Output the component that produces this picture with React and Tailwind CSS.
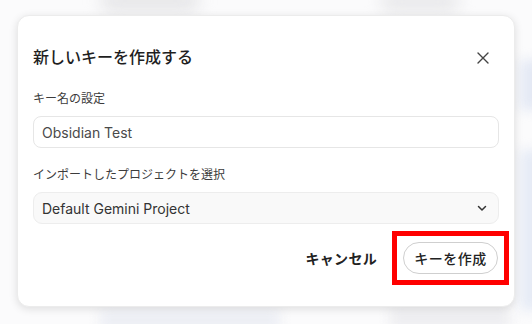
import React from "react";

export default function App() {
  return (
    <div
      className="relative w-[532px] h-[324px] overflow-hidden bg-[#fbfbfc]"
      style={{ fontFamily: "Inter, 'Noto Sans CJK JP', sans-serif" }}
    >
      {/* blurred page behind */}
      <div className="absolute left-[100px] top-[-10px] w-[100px] h-[22px] rounded-full bg-[#e6e6e8] blur-[8px]" />
      <div className="absolute left-[380px] top-[-8px] w-[80px] h-[20px] rounded-full bg-[#e8e8ea] blur-[8px]" />
      <div className="absolute left-[520px] top-[60px] w-[30px] h-[50px] bg-[#e4e9f4] blur-[6px]" />
      <div className="absolute left-[520px] top-[150px] w-[30px] h-[160px] bg-[#e6ebf5] blur-[6px]" />
      <div className="absolute left-[100px] top-[310px] w-[180px] h-[20px] bg-[#eceef4] blur-[6px]" />
      <div className="absolute left-[390px] top-[308px] w-[120px] h-[20px] bg-[#ededf0] blur-[6px]" />

      <div className="absolute left-[17px] top-[15px] w-[498px] h-[292px] rounded-[12px] bg-white border border-[#ececec] shadow-[0_2px_8px_rgba(0,0,0,0.12)] flex flex-col px-[15px]">
        <div className="flex items-center justify-between mt-[28px] h-[26px]">
          <div className="text-[16px] font-medium text-[#1f1f1f]">
            新しいキーを作成する
          </div>
          <svg width="14" height="14" viewBox="0 0 14 14" className="mr-[9px] mt-[2px]">
            <path d="M2 2 L12 12 M12 2 L2 12" stroke="#444" strokeWidth="1.4" strokeLinecap="round" />
          </svg>
        </div>

        <div className="mt-[21px] text-[12px] text-[#3c3c3c] leading-[16px]">キー名の設定</div>
        <div className="mt-[9px] h-[32px] rounded-[8px] border border-[#e6e6e6] flex items-center px-[8px] text-[14px] text-[#4a4a4a]">
          Obsidian Test
        </div>

        <div className="mt-[19px] text-[12px] text-[#3c3c3c] leading-[16px]">インポートしたプロジェクトを選択</div>
        <div className="mt-[9px] h-[32px] rounded-[9px] border border-[#ededed] bg-[#f9f9f9] flex items-center justify-between px-[8px] text-[14px] text-[#333]">
          <span>Default Gemini Project</span>
          <svg width="12" height="12" viewBox="0 0 12 12" className="mr-[2px]">
            <path d="M2.5 4.5 L6 8 L9.5 4.5" fill="none" stroke="#333" strokeWidth="1.5" strokeLinecap="round" strokeLinejoin="round" />
          </svg>
        </div>

        <div className="mt-[7px] flex items-center justify-end">
          <span className="text-[14px] font-semibold text-[#222] mr-[15px] tracking-[0.3px]">キャンセル</span>
          <div className="border-[5px] border-[#ff0000] w-[117px] h-[54px] flex items-center justify-center mr-[-10px]">
            <div className="w-[95px] h-[32px] rounded-full border border-[#cfcfcf] bg-white flex items-center justify-center text-[14px] font-medium text-[#222] tracking-[0.5px]">
              キーを作成
            </div>
          </div>
        </div>
      </div>
    </div>
  );
}
